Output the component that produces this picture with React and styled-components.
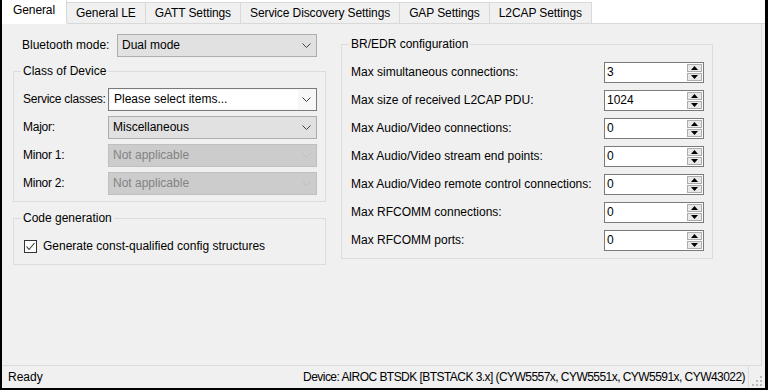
import React from 'react'
import styled, { createGlobalStyle } from 'styled-components'

const GlobalStyle = createGlobalStyle`
  html, body {
    margin: 0;
    padding: 0;
  }
  body {
    font-family: "Liberation Sans", Arial, sans-serif;
    font-size: 12px;
    color: #000;
  }
  * {
    box-sizing: border-box;
  }
`

const tabs = [
  'General',
  'General LE',
  'GATT Settings',
  'Service Discovery Settings',
  'GAP Settings',
  'L2CAP Settings',
]

const classRows = [
  { label: 'Service classes:', value: 'Please select items...', variant: 'editable' },
  { label: 'Major:', value: 'Miscellaneous', variant: 'normal' },
  { label: 'Minor 1:', value: 'Not applicable', variant: 'disabled' },
  { label: 'Minor 2:', value: 'Not applicable', variant: 'disabled' },
]

const brEdrRows = [
  { label: 'Max simultaneous connections:', value: '3' },
  { label: 'Max size of received L2CAP PDU:', value: '1024' },
  { label: 'Max Audio/Video connections:', value: '0' },
  { label: 'Max Audio/Video stream end points:', value: '0' },
  { label: 'Max Audio/Video remote control connections:', value: '0' },
  { label: 'Max RFCOMM connections:', value: '0' },
  { label: 'Max RFCOMM ports:', value: '0' },
]

function Chevron({ color }) {
  return (
    <svg width="9" height="5" viewBox="0 0 9 5">
      <polyline points="0.5,0.5 4.5,4.5 8.5,0.5" fill="none" stroke={color} strokeWidth="1" />
    </svg>
  )
}

function ComboBox({ value, variant = 'normal', width }) {
  const arrow = variant === 'disabled' ? '#bfbfbf' : '#404040'
  return (
    <Combo $variant={variant} $width={width}>
      <ComboText $variant={variant}>{value}</ComboText>
      <ComboArrow $variant={variant}>
        <Chevron color={arrow} />
      </ComboArrow>
    </Combo>
  )
}

function Triangle({ up }) {
  return (
    <svg width="7" height="4" viewBox="0 0 7 4">
      <polygon points={up ? '0,4 7,4 3.5,0' : '0,0 7,0 3.5,4'} fill="#000" />
    </svg>
  )
}

function SpinBox({ value }) {
  return (
    <Spin>
      <SpinValue>{value}</SpinValue>
      <SpinButtons>
        <SpinButton><Triangle up /></SpinButton>
        <SpinButton><Triangle /></SpinButton>
      </SpinButtons>
    </Spin>
  )
}

function SizeGrip() {
  const dots = [
    [8, 0], [4, 4], [8, 4], [0, 8], [4, 8], [8, 8],
  ]
  return (
    <svg width="11" height="11" viewBox="0 0 11 11">
      {dots.map(([x, y]) => (
        <rect key={`${x}-${y}`} x={x} y={y} width="2" height="2" fill="#bcbcbc" />
      ))}
    </svg>
  )
}

function CheckBox({ checked }) {
  return (
    <Box>
      {checked && (
        <svg width="11" height="11" viewBox="0 0 11 11">
          <polyline points="1.5,5.5 4,8.5 9.5,2" fill="none" stroke="#333" strokeWidth="1.1" />
        </svg>
      )}
    </Box>
  )
}

export default function App() {
  return (
    <>
      <GlobalStyle />
      <Window>
        <TabStrip>
          {tabs.map((t, i) => (
            <Tab key={t} $active={i === 0}>{t}</Tab>
          ))}
        </TabStrip>
        <Page>
          <LeftColumn>
            <ModeRow>
              <span>Bluetooth mode:</span>
              <ComboBox value="Dual mode" width={200} />
            </ModeRow>
            <Group $top={6}>
              <Legend>Class of Device</Legend>
              {classRows.map((r) => (
                <FormRow key={r.label}>
                  <Label $tight>{r.label}</Label>
                  <ComboBox value={r.value} variant={r.variant} width={209} />
                </FormRow>
              ))}
            </Group>
            <Group $top={8}>
              <Legend>Code generation</Legend>
              <CheckRow>
                <CheckBox checked />
                <span>Generate const-qualified config structures</span>
              </CheckRow>
            </Group>
          </LeftColumn>
          <RightColumn>
            <Group $top={0}>
              <Legend>BR/EDR configuration</Legend>
              {brEdrRows.map((r) => (
                <FormRow key={r.label}>
                  <Label>{r.label}</Label>
                  <SpinBox value={r.value} />
                </FormRow>
              ))}
            </Group>
          </RightColumn>
        </Page>
        <StatusBar>
          <span>Ready</span>
          <StatusRight>
            <DeviceText>
              Device: AIROC BTSDK [BTSTACK 3.x] (CYW5557x, CYW5551x, CYW5591x, CYW43022)
            </DeviceText>
            <Grip>
              <SizeGrip />
            </Grip>
          </StatusRight>
        </StatusBar>
      </Window>
    </>
  )
}

const Window = styled.div`
  width: 768px;
  height: 390px;
  display: flex;
  flex-direction: column;
  background: #f0f0f0;
  border-left: 2px solid #000;
  border-right: 3px solid #000;
  border-bottom: 2px solid #000;
  overflow: hidden;
`

const TabStrip = styled.div`
  display: flex;
  align-items: flex-end;
  height: 24px;
  background: #fff;
  border-bottom: 1px solid #d9d9d9;
  flex-shrink: 0;
`

const Tab = styled.div`
  display: flex;
  align-items: center;
  height: ${(p) => (p.$active ? '25px' : '22px')};
  margin-bottom: -1px;
  padding: 0 ${(p) => (p.$active ? '11px' : '9px')};
  padding-bottom: ${(p) => (p.$active ? '3px' : '1px')};
  background: ${(p) => (p.$active ? '#fff' : '#f0f0f0')};
  border: 1px solid #d9d9d9;
  border-bottom: 1px solid ${(p) => (p.$active ? '#fff' : '#d9d9d9')};
  border-left-width: 0;
  letter-spacing: -0.1px;
  white-space: nowrap;
  position: relative;
  z-index: ${(p) => (p.$active ? 1 : 0)};
`

const Page = styled.div`
  flex: 1;
  display: flex;
  align-items: flex-start;
  gap: 15px;
  padding: 9px 0 0 11px;
  border-bottom: 1px solid #dcdcdc;
  border-right: 1px solid #dcdcdc;
  margin-right: 3px;
`

const LeftColumn = styled.div`
  width: 313px;
  display: flex;
  flex-direction: column;
`

const RightColumn = styled.div`
  width: 372px;
  margin-top: 3px;
`

const ModeRow = styled.div`
  display: flex;
  align-items: center;
  justify-content: space-between;
  height: 24px;
  padding: 0 9px 0 9px;
`

const Group = styled.fieldset`
  margin: ${(p) => p.$top}px 0 0 0;
  padding: 6px 8px 4px 9px;
  border: 1px solid #dcdcdc;
  min-width: 0;
`

const Legend = styled.legend`
  padding: 0 2px;
  margin-left: -2px;
  line-height: 16px;
`

const FormRow = styled.div`
  display: flex;
  align-items: center;
  justify-content: space-between;
  height: 28px;
  white-space: nowrap;
`

const Label = styled.span`
  letter-spacing: ${(p) => (p.$tight ? '-0.25px' : '0')};
  white-space: nowrap;
`

const CheckRow = styled.div`
  display: flex;
  align-items: center;
  gap: 6px;
  height: 28px;
  padding-left: 1px;
`

const Box = styled.div`
  width: 13px;
  height: 13px;
  border: 1px solid #333;
  background: #fff;
  display: flex;
  align-items: center;
  justify-content: center;
`

const Combo = styled.div`
  width: ${(p) => p.$width}px;
  height: 23px;
  flex-shrink: 0;
  display: flex;
  align-items: center;
  border: 1px solid
    ${(p) =>
      p.$variant === 'editable' ? '#7a7a7a' : p.$variant === 'disabled' ? '#bfbfbf' : '#adadad'};
  background: ${(p) =>
    p.$variant === 'editable' ? '#f7f7f7' : p.$variant === 'disabled' ? '#cccccc' : '#e1e1e1'};
`

const ComboText = styled.div`
  flex: 1;
  align-self: stretch;
  display: flex;
  align-items: center;
  padding-left: 4px;
  margin: ${(p) => (p.$variant === 'editable' ? '1px 0 1px 1px' : '0')};
  background: ${(p) => (p.$variant === 'editable' ? '#fff' : 'transparent')};
  color: ${(p) => (p.$variant === 'disabled' ? '#838383' : '#000')};
  white-space: nowrap;
`

const ComboArrow = styled.div`
  width: 18px;
  display: flex;
  align-items: center;
  justify-content: center;
  padding-right: 2px;
  padding-top: 1px;
`

const Spin = styled.div`
  width: 100px;
  height: 21px;
  flex-shrink: 0;
  display: flex;
  border: 1px solid #7a7a7a;
  background: #fff;
`

const SpinValue = styled.div`
  flex: 1;
  display: flex;
  align-items: center;
  padding-left: 2px;
`

const SpinButtons = styled.div`
  width: 15px;
  margin: 1px 1px 1px 0;
  display: flex;
  flex-direction: column;
  gap: 1px;
`

const SpinButton = styled.div`
  flex: 1;
  display: flex;
  align-items: center;
  justify-content: center;
  background: #e8e8e8;
  border: 1px solid #adadad;
`

const StatusBar = styled.div`
  height: 22px;
  flex-shrink: 0;
  display: flex;
  align-items: center;
  justify-content: space-between;
  padding-left: 6px;
`

const StatusRight = styled.div`
  display: flex;
  align-items: center;
  height: 100%;
`

const DeviceText = styled.div`
  height: 100%;
  display: flex;
  align-items: center;
  padding-right: 3px;
  border-right: 1px solid #dcdcdc;
  margin: 2px 0;
  letter-spacing: -0.55px;
  white-space: nowrap;
`

const Grip = styled.div`
  width: 16px;
  height: 100%;
  display: flex;
  align-items: flex-end;
  justify-content: flex-end;
  padding: 0 2px 1px 0;
`
